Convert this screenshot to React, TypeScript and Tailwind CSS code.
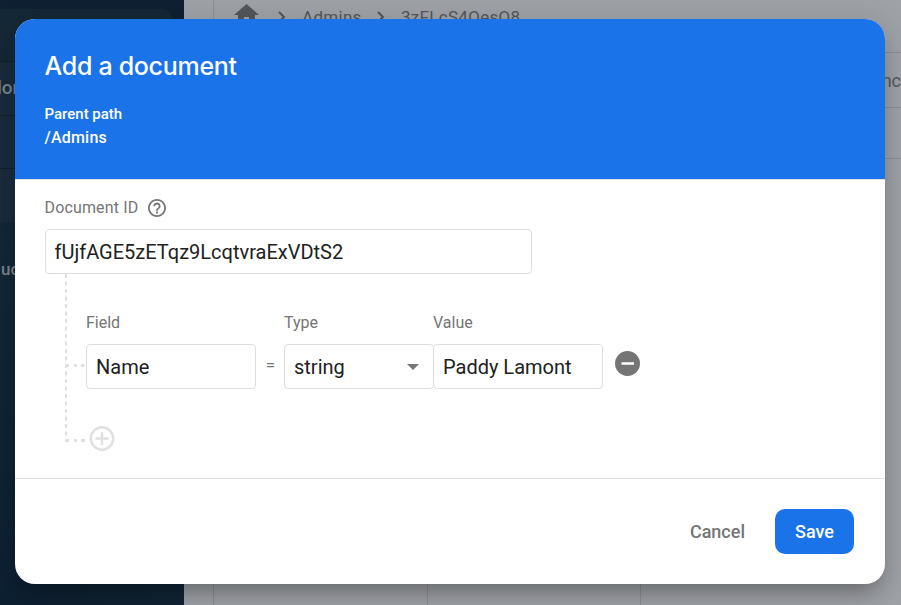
import type { ReactNode } from 'react';

function Backdrop() {
  return (
    <div className="flex h-full w-full bg-[#9fa2a7]">
      <aside className="flex w-[184px] shrink-0 flex-col overflow-hidden bg-[#0e2133]">
        <div className="flex h-[62px] items-start border-b border-[#10202f] bg-[#0e2031] pt-[9px]">
          <div className="h-[52px] w-[172px] rounded-tr-[10px] bg-[#152837]" />
        </div>
        <div className="h-[54px] border-b border-[#10202f] bg-[#192c3d] pt-[14px]">
          <span className="-ml-[3px] block text-[19px] leading-6 font-medium text-[#7c858e]">lore</span>
        </div>
        <div className="h-[53px] border-b border-[#10202f] bg-[#192c3d]" />
        <div className="h-[53px] bg-[#1a2c3d]" />
        <div className="flex-1 bg-[linear-gradient(45deg,#0d2032_0%,#142838_65%,#0e2133_100%)] pt-[35px]">
          <span className="block pl-px text-[17px] leading-6 font-medium text-[#7c858e]">uct</span>
        </div>
      </aside>
      <div className="w-[30px] shrink-0 border-r border-[#8c8f93]" />
      <main className="flex min-w-0 flex-1 flex-col">
        <header className="flex h-[53px] shrink-0 items-start border-b border-[#8c8f93] pl-5 text-[17px] leading-5 text-[#53565a]">
          <svg className="mt-[3px] h-[22px] w-[25px]" viewBox="0 0 25 22" fill="currentColor">
            <path d="M12.5 1 0 12h4v10h6v-8h5v8h6V12h4z" />
          </svg>
          <svg className="mt-[11px] ml-[19px] h-3 w-2" viewBox="0 0 8 12" fill="none" stroke="currentColor" strokeWidth="2">
            <path d="m1 1 5 5-5 5" />
          </svg>
          <span className="mt-[7px] ml-[16px] w-[59px] tracking-[0.3px]">Admins</span>
          <svg className="mt-[11px] ml-[16px] h-3 w-2" viewBox="0 0 8 12" fill="none" stroke="currentColor" strokeWidth="2">
            <path d="m1 1 5 5-5 5" />
          </svg>
          <span className="mt-[7px] ml-[16px] tracking-[0.3px]">3zFLcS4QesQ8</span>
        </header>
        <div className="flex h-[55px] shrink-0 items-center justify-end overflow-hidden border-b border-[#8c8f93]">
          <span className="text-[18px] text-[#55585c]">func</span>
        </div>
        <div className="h-[51px] shrink-0 border-b border-[#8c8f93]" />
        <div className="flex flex-1">
          <div className="w-[214px] border-r border-[#8c8f93]" />
          <div className="w-[213px] border-r border-[#8c8f93]" />
        </div>
      </main>
    </div>
  );
}

function Label({ children, className }: { children: ReactNode; className: string }) {
  return <span className={`text-[16px] leading-5 text-[#757575] ${className}`}>{children}</span>;
}

function Box({ children, className }: { children: ReactNode; className: string }) {
  return (
    <div className={`flex h-[45px] shrink-0 items-center rounded-[4px] border border-[#dedede] bg-white pl-[9px] text-[20px] text-[#212121] ${className}`}>
      {children}
    </div>
  );
}

function Dialog() {
  return (
    <section className="absolute top-[19px] left-[15px] flex h-[565px] w-[870px] flex-col overflow-hidden rounded-[20px] bg-white shadow-[0_14px_20px_-8px_rgba(0,0,0,0.26),0_8px_32px_6px_rgba(0,0,0,0.13)]">
      <header className="flex h-40 shrink-0 flex-col bg-[#1a73e8] pl-[29.5px] text-white">
        <h1 className="mt-[31px] font-['Inter'] text-[25px] leading-8 font-medium tracking-[-0.3px]">Add a document</h1>
        <p className="mt-[22px] text-[15px] leading-5 font-medium">Parent path</p>
        <p className="mt-[4px] text-[16px] leading-5 font-medium tracking-[0.2px]">/Admins</p>
      </header>
      <div className="flex h-[299px] shrink-0 flex-col border-t border-[#e0e0e0]">
        <div className="mt-[18px] ml-[29.5px] flex h-5 items-center">
          <Label className="w-[103.500px] tracking-[0.15px]">Document ID</Label>
          <svg className="-ml-[0.5px] h-[18px] w-[18px] text-[#757575]" viewBox="2 2 20 20" fill="currentColor">
            <path d="M11 18h2v-2h-2v2zm1-16C6.48 2 2 6.48 2 12s4.48 10 10 10 10-4.48 10-10S17.52 2 12 2zm0 18c-4.41 0-8-3.59-8-8s3.59-8 8-8 8 3.59 8 8-3.59 8-8 8zm0-14c-2.21 0-4 1.79-4 4h2c0-1.1.9-2 2-2s2 .9 2 2c0 2-3 1.75-3 5h2c0-2.25 3-2.5 3-5 0-2.21-1.79-4-4-4z" />
          </svg>
        </div>
        <Box className="mt-[11px] ml-[30px] w-[487px]">
          <span className="-ml-[0.5px]">fUjfAGE5zETqz9LcqtvraExVDtS2</span>
        </Box>
        <div className="ml-[50px] flex">
          <svg className="h-[170px] w-[21px] shrink-0" viewBox="0 0 21 170" fill="none" stroke="#e0e0e0">
            <path d="M1 0V163" strokeWidth="2" strokeDasharray="4 3.5" />
            <path d="M0 91.500h4m5 0h3m4 0h3.500M0 166.500h4m5 0h3m4 0h4" strokeWidth="3" />
          </svg>
          <div className="flex flex-col">
            <div className="mt-[39px] flex h-5">
              <Label className="w-[198px]">Field</Label>
              <Label className="w-[149px]">Type</Label>
              <Label className="">Value</Label>
            </div>
            <div className="mt-[11px] flex">
              <Box className="w-[170px]">Name</Box>
              <span className="mt-[11px] w-[28px] pl-px text-center text-[17px] leading-5 text-[#757575]">=</span>
              <Box className="w-[150px]">
                string
                <svg className="ml-auto mr-[14px] h-[6px] w-3" viewBox="0 0 12 6" fill="#757575">
                  <path d="M0 0h12L6 6z" />
                </svg>
              </Box>
              <Box className="-ml-px w-[170px]">Paddy Lamont</Box>
              <svg className="mt-[7px] ml-[12px] h-[25px] w-[25px]" viewBox="0 0 25 25">
                <circle cx="12.5" cy="12.5" r="12.5" fill="#757575" />
                <path d="M6.5 12.5h12.5" stroke="white" strokeWidth="2.5" />
              </svg>
            </div>
            <svg className="mt-[37px] ml-[3px] h-[26px] w-[26px]" viewBox="0 0 26 26" fill="none" stroke="#e0e0e0" strokeWidth="2.5">
              <circle cx="13" cy="12.5" r="11.2" />
              <path d="M6.5 12.5h13M13 6v13" />
            </svg>
          </div>
        </div>
      </div>
      <footer className="flex flex-1 items-start justify-end border-t border-[#e0e0e0] pt-[30px] pr-[31px] text-[18px] font-medium">
        <button className="mr-[30px] h-[45px] text-[#757575]">Cancel</button>
        <button className="h-[45px] w-[79px] rounded-[10px] bg-[#1a73e8] text-white">Save</button>
      </footer>
    </section>
  );
}

export default function App() {
  return (
    <div className="relative h-[605px] w-[901px] overflow-hidden font-['Roboto',sans-serif]">
      <Backdrop />
      <Dialog />
    </div>
  );
}
